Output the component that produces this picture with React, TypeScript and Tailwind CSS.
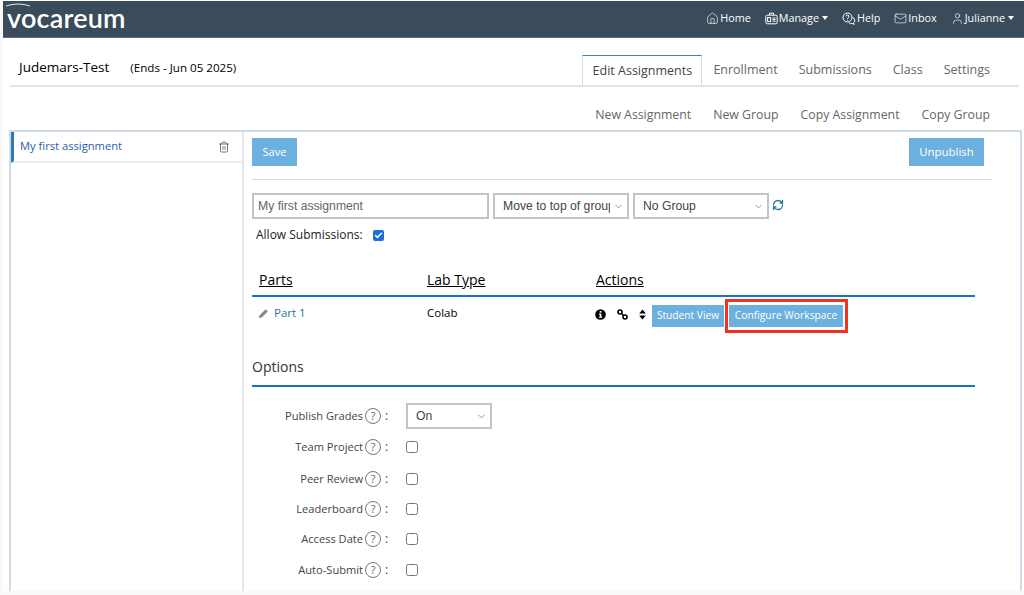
import React from "react";
import { Home, Mail, User, Trash2, RefreshCw, Check, ChevronDown } from "lucide-react";

const Caret = () => (
  <span className="inline-block ml-[2px] w-0 h-0 border-x-[3.5px] border-x-transparent border-t-[4px] border-t-white" />
);

const ManageIcon = () => (
  <svg width="13" height="13" viewBox="0 0 13 13" fill="none" stroke="white" strokeWidth="1">
    <rect x="0.8" y="3.2" width="11.4" height="8.6" rx="1.5" />
    <path d="M4.5 3V1.2h4V3" />
    <rect x="2.6" y="5.6" width="3" height="4" />
    <path d="M7.5 6h3M7.5 7.6h3M7.5 9.2h3" />
  </svg>
);

const HelpIcon = () => (
  <svg width="14" height="13" viewBox="0 0 14 13" fill="none" stroke="white" strokeWidth="1">
    <circle cx="5.5" cy="5.5" r="4.5" />
    <path d="M4 4.3a1.5 1.5 0 1 1 2 1.5c-.4.2-.5.5-.5 1M5.5 7.7v.8" />
    <path d="M10.5 5.5a3 3 0 0 1 1 5.4l.8 1.5-2-.9a3 3 0 0 1-3.5-1" />
  </svg>
);

const NavItem = ({ icon, label, caret }: { icon: React.ReactNode; label: string; caret?: boolean }) => (
  <a className="flex items-center gap-px text-[10.8px] text-white">
    {icon}
    <span>{label}</span>
    {caret && <Caret />}
  </a>
);

const Dropdown = ({ w, value, label }: { w: string; value: string; label: string }) => (
  <div className={`relative ${w} h-[26px]`}>
    <select
      defaultValue={value}
      className="appearance-none block w-full h-full border-2 border-[#c4c4c4] bg-white pl-[8px] pr-[17px] text-[12.2px] text-[#444] rounded-none outline-none"
    >
      <option value={value}>{label}</option>
    </select>
    <ChevronDown size={11} strokeWidth={1.3} className="absolute right-[5px] top-[8px] text-[#555] pointer-events-none" />
  </div>
);

const OptionRow = ({ label, h, children }: { label: string; h: string; children: React.ReactNode }) => (
  <div className={`flex items-center ${h}`}>
    <span className="w-[111px] text-right text-[11.1px] text-[#444]">{label}</span>
    <span className="ml-[2px] w-[16px] h-[16px] rounded-full border border-[#777] text-[#666] text-[11px] flex items-center justify-center">?</span>
    <span className="ml-[4px] w-[21px] text-[12px] text-[#444]">:</span>
    {children}
  </div>
);

const Box = () => <input type="checkbox" className="block w-[12px] h-[12px] m-0" />;

export default function App() {
  return (
    <div className="w-[1024px] h-[595px] overflow-hidden bg-[#f9f9f9] pl-[3px]" style={{ fontFamily: '"Open Sans","Noto Sans",sans-serif' }}>
      <div className="h-[591px] bg-white pt-px overflow-hidden">
        {/* Navbar */}
        <header className="h-[37px] bg-[#3a4b5b] border-b border-[#5d6e7e] flex items-center justify-between pr-[10px]">
          <div className="relative pl-[4px] text-[27px] leading-none font-semibold text-white tracking-[0.2px] -mt-[3px]" style={{ fontFamily: "Lato, sans-serif" }}>
            <svg width="30" height="6" viewBox="0 0 30 6" className="absolute left-[1px] -top-[2px]" fill="none">
              <path d="M2 4 Q 14 0 26 4" stroke="#e4e9ee" strokeWidth="1" />
            </svg>
            vocareum
          </div>
          <nav className="flex items-center gap-[14px] -mt-[2px]">
            <NavItem icon={<Home size={13} strokeWidth={1.2} />} label="Home" />
            <NavItem icon={<ManageIcon />} label="Manage" caret />
            <NavItem icon={<HelpIcon />} label="Help" />
            <NavItem icon={<Mail size={13} strokeWidth={1.2} />} label="Inbox" />
            <NavItem icon={<User size={13} strokeWidth={1.2} />} label="Julianne" caret />
          </nav>
        </header>

        {/* Title and tabs */}
        <div className="ml-[7px] mr-[5px] mt-[17px] h-[32px] border-b-2 border-[#e4e4e4] flex items-stretch justify-between">
          <div className="flex items-center text-black pl-[9px] -mt-[5px]">
            <span className="text-[13.5px]">Judemars-Test</span>
            <span className="ml-[21px] text-[11.6px]">(Ends - Jun 05 2025)</span>
          </div>
          <div className="flex items-start text-[12.5px] leading-[30px] text-[#666] pr-[29px]">
            <span className="h-[30px] w-[120px] border border-b-0 border-[#cfdde8] border-t-[#3b82b8] text-[#444] flex items-center justify-center bg-white">Edit Assignments</span>
            <span className="ml-[11px]">Enrollment</span>
            <span className="ml-[21px]">Submissions</span>
            <span className="ml-[21px]">Class</span>
            <span className="ml-[21px]">Settings</span>
          </div>
        </div>

        {/* Sub navigation */}
        <div className="mr-[31px] mt-[19px] h-[18px] pr-[3px] flex items-center justify-end gap-[22px] text-[12.3px] text-[#666]">
          <span>New Assignment</span>
          <span>New Group</span>
          <span>Copy Assignment</span>
          <span>Copy Group</span>
        </div>

        {/* Main panel */}
        <div className="ml-[6px] mr-[2px] mt-[6px] h-[462px] border-x-2 border-t-2 border-[#cfdbe6] flex">
          <aside className="w-[233px] shrink-0 border-r-2 border-[#dfe6ec]">
            <div className="h-[31px] border-l-[3px] border-[#2b7cb3] border-b-2 border-b-[#eeeeee] flex items-center justify-between pl-[6px] pr-[12px] text-[11.2px] text-[#1f5fa8]">
              <span>My first assignment</span>
              <Trash2 size={12} strokeWidth={1.4} className="text-[#444]" />
            </div>
          </aside>

          <main className="flex-1 pl-[8px] pt-[6px]">
            <div className="w-[740px] h-[42px] border-b border-[#d9d9d9] flex justify-between items-start">
              <button className="w-[45px] h-[28px] bg-[#6cb0e0] text-white text-[11px]">Save</button>
              <button className="mr-[8px] w-[75px] h-[28px] bg-[#6cb0e0] text-white text-[11.4px]">Unpublish</button>
            </div>

            <div className="mt-[13px] flex items-center" style={{ fontFamily: '"Liberation Sans",Arial,sans-serif' }}>
              <input defaultValue="My first assignment" className="w-[237px] h-[26px] border-2 border-[#c4c4c4] pl-[4px] text-[12.2px] text-[#666] outline-none" />
              <div className="ml-[4px]"><Dropdown w="w-[136px]" value="top" label="Move to top of group" /></div>
              <div className="ml-[4px]"><Dropdown w="w-[136px]" value="none" label="No Group" /></div>
              <RefreshCw size={12} strokeWidth={2.6} className="ml-[3px] -mt-[2px] text-[#1f7a9a]" />
            </div>

            <div className="mt-[7px] ml-[4px] flex items-center h-[18px] text-[12px] text-[#222]">
              <span className="w-[117px]">Allow Submissions:</span>
              <span className="w-[11px] h-[11px] rounded-[2px] bg-[#1a6fe0] flex items-center justify-center">
                <Check size={9} strokeWidth={4} className="text-white" />
              </span>
            </div>

            {/* Parts table */}
            <div className="mt-[26px] w-[723px] h-[27px] border-b-2 border-[#1d70c4] grid grid-cols-[168px_169px_1fr] text-[14px] leading-[19px] text-black underline pl-[7px] items-start">
              <span>Parts</span>
              <span>Lab Type</span>
              <span>Actions</span>
            </div>
            <div className="w-[723px] h-[37px] grid grid-cols-[168px_169px_1fr] pl-[6px] items-center text-[11.5px]">
              <span className="flex items-center gap-[5px] text-[#1f7a9a] -mt-[5px]">
                <svg width="11" height="11" viewBox="0 0 11 11" fill="#888">
                  <path d="M7.6 1.2l2.2 2.2-6 6-2.9.7.7-2.9z" />
                </svg>
                Part 1
              </span>
              <span className="text-black pl-px -mt-[5px]">Colab</span>
              <div className="flex items-center">
                <svg width="11" height="11" viewBox="0 0 11 11" className="-mt-[2px]">
                  <circle cx="5.5" cy="5.5" r="5.3" fill="black" />
                  <rect x="4.7" y="2" width="1.7" height="1.6" fill="white" />
                  <path d="M3.9 4.5h2.5v3.2h.8v1H3.9v-1h.8V5.5h-.8z" fill="white" />
                </svg>
                <svg width="11" height="11" viewBox="0 0 11 11" fill="none" stroke="black" strokeWidth="1.6" className="ml-[11px] -mt-[2px]">
                  <circle cx="3" cy="3" r="2" />
                  <circle cx="8" cy="8" r="2" />
                  <path d="M4.5 4.5l2 2" />
                </svg>
                <svg width="7" height="11" viewBox="0 0 7 11" fill="black" className="ml-[11px] -mt-[2px]">
                  <path d="M3.5 0.5L6.8 4.5H0.2zM3.5 10.5L0.2 6.5H6.8z" />
                </svg>
                <button className="ml-[6px] w-[72px] h-[22px] bg-[#6cb0e0] text-white text-[10.2px]">Student View</button>
                <div className="ml-[1px] pl-[1px] pr-[2px] border-[3px] border-[#f0321e] h-[34px] w-[123px] flex items-center bg-white shrink-0">
                  <button className="w-[114px] h-[22px] bg-[#6cb0e0] text-white text-[10.3px]">Configure Workspace</button>
                </div>
              </div>
            </div>

            {/* Options */}
            <div className="mt-[22px] w-[723px] h-[31px] border-b-2 border-[#1d70c4] text-[14px] text-[#333]">Options</div>
            <div className="mt-[16px]">
              <OptionRow label="Publish Grades" h="h-[26px]">
                <div style={{ fontFamily: '"Liberation Sans",Arial,sans-serif' }}><Dropdown w="w-[86px]" value="on" label="On" /></div>
              </OptionRow>
              <div className="mt-[2px]"><OptionRow label="Team Project" h="h-[32px]"><Box /></OptionRow></div>
              <OptionRow label="Peer Review" h="h-[32px]"><Box /></OptionRow>
              <OptionRow label="Leaderboard" h="h-[28px]"><Box /></OptionRow>
              <OptionRow label="Access Date" h="h-[32px]"><Box /></OptionRow>
              <OptionRow label="Auto-Submit" h="h-[30px]"><Box /></OptionRow>
            </div>
          </main>
        </div>
      </div>
    </div>
  );
}
